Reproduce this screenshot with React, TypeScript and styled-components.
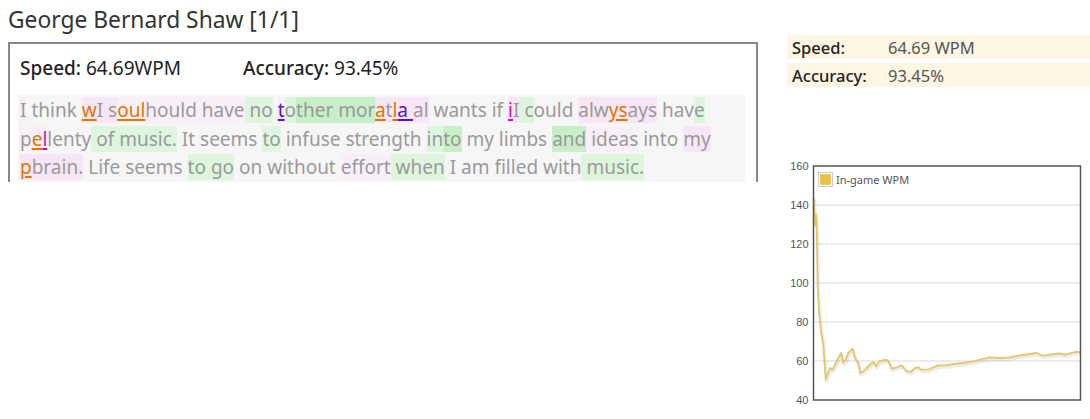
import React from "react";
import styled, { createGlobalStyle } from "styled-components";

const Global = createGlobalStyle`
  html, body { margin: 0; padding: 0; background: #fff; }
  body { font-family: "Noto Sans", "Open Sans", sans-serif; }
`;

const Page = styled.div`
  display: flex;
  align-items: flex-start;
  padding: 0 0 0 8px;
  width: 1090px;
  height: 419px;
  box-sizing: border-box;
  overflow: hidden;
`;

const LeftCol = styled.div`
  width: 750px;
  flex: none;
  display: flex;
  flex-direction: column;
`;

const Title = styled.h2`
  margin: 2px 0 0 0;
  font-size: 22.8px;
  line-height: 36px;
  font-weight: 400;
  color: #333;
`;

const Box = styled.div`
  margin-top: 4px;
  height: 140px;
  border: 2px solid #888;
  border-bottom: none;
  box-sizing: border-box;
  padding: 0 11px 0 8px;
  display: flex;
  flex-direction: column;
`;

const StatRow = styled.div`
  display: flex;
  padding: 9px 0 0 2px;
  height: 51px;
  box-sizing: border-box;
  font-size: 19px;
  line-height: 30px;
  color: #222;
`;

const Stat = styled.div<{ $w?: number }>`
  width: ${(p) => p.$w ?? 160}px;
  flex: none;
`;

const Label = styled.span`
  font-weight: 500;
`;

const TextArea = styled.div`
  background: #f6f6f6;
  padding: 1px 2px 0;
  font-size: 19px;
  line-height: 28.5px;
  color: #9a9a9a;
  height: 87px;
  box-sizing: border-box;
  overflow: hidden;
`;

const bgMap: Record<string, string> = {
  n: "transparent",
  p: "#f6e6f6",
  q: "#f9eff9",
  g: "#def5de",
  G: "#c8efc8",
};

const Seg = styled.span<{ $bg: string }>`
  background: ${(p) => bgMap[p.$bg]};
`;

const errColor: Record<string, string> = {
  o: "#dd7700",
  u: "#5a10d8",
  m: "#cc10b8",
};

const Err = styled.span<{ $c: string }>`
  color: ${(p) => errColor[p.$c]};
  text-decoration: underline;
  text-decoration-thickness: 2px;
  text-underline-offset: 2px;
`;

const RightCol = styled.div`
  margin-left: 29px;
  margin-top: 35px;
  flex: 1;
  display: flex;
  flex-direction: column;
`;

const StatsTable = styled.div`
  display: flex;
  flex-direction: column;
  gap: 4px;
`;

const StatsRow = styled.div`
  display: flex;
  background: #fdf6e2;
  height: 24px;
  align-items: center;
  padding-left: 5px;
  font-size: 16.5px;
`;

const StatsLabel = styled.div`
  width: 96px;
  font-weight: 500;
  color: #222;
`;

const StatsValue = styled.div`
  color: #555;
`;

const ChartWrap = styled.div`
  margin-left: -7px;
  margin-top: 71px;
  width: 310px;
  height: 259px;
`;

type Piece = string | [string, string];
type Segment = [string, Piece[]];

const segments: Segment[] = [
  ["q", ["I"]],
  ["n", [" think "]],
  ["p", [["o", "w"], "I s"]],
  ["q", [["o", "oul"], "hould have"]],
  ["g", [" no"]],
  ["n", [" "]],
  ["q", [["u", "t"]]],
  ["g", ["o"]],
  ["G", ["ther mor"]],
  ["p", [["o", "a"], "t", ["o", "l"], ["u", "a "], "al"]],
  ["n", [" wants if "]],
  ["p", [["m", "i"], "I"]],
  ["g", [" c"]],
  ["n", ["ould "]],
  ["p", ["alw", ["o", "ys"], "ays"]],
  ["n", [" hav"]],
  ["g", ["e "]],
  ["q", ["p", ["o", "e"], ["m", "l"]]],
  ["n", ["lenty"]],
  ["g", [" of music."]],
  ["n", [" It seems "]],
  ["g", ["to"]],
  ["n", [" infuse strength "]],
  ["g", ["in"]],
  ["G", ["to"]],
  ["n", [" my limbs "]],
  ["G", ["and"]],
  ["q", [" ideas"]],
  ["n", [" into "]],
  ["p", ["my "]],
  ["p", [["o", "p"], "brain."]],
  ["n", [" Life seems "]],
  ["g", ["to go"]],
  ["n", [" on without "]],
  ["q", ["effort"]],
  ["g", [" when"]],
  ["n", [" I am filled with"]],
  ["g", [" music."]],
];

const pts: [number, number][] = [
  [813.7, 200], [814.7, 226.7], [816, 216.7], [816.7, 230], [817.7, 290],
  [819, 313], [820, 323], [821, 333], [823.3, 346.7], [825.7, 381.7],
  [827.3, 376.7], [830, 370], [832.7, 371.7], [835, 366.7], [838.3, 360],
  [841, 355], [843.3, 365], [845.7, 361.7], [848.3, 355], [852.7, 350.7],
  [855, 360], [858.3, 365], [860, 375], [863.3, 373.3], [866.7, 370],
  [870.7, 366], [873.3, 364], [876, 368.3], [879.3, 363.3], [885, 361.7],
  [888.3, 362.7], [891.7, 370.7], [896.7, 369.3], [901.7, 367.3], [906, 372.7],
  [910.7, 374], [915, 370], [918.3, 369.3], [921.7, 371.7], [928.3, 371.7],
  [933.3, 369.3], [938.3, 367.3], [946.7, 367.3], [953.3, 366], [963.3, 365],
  [973.3, 363.3], [980, 361.7], [990, 359.3], [1000, 360], [1010, 359.3],
  [1020, 357.3], [1030, 356], [1036.7, 355], [1041.7, 357.3], [1046.7, 357.3],
  [1053.3, 356], [1060, 355.3], [1065, 356.7], [1070, 355.3], [1075, 354],
  [1080, 354],
];

const OX = 780;
const OY = 160;
const plotL = 813.5 - OX;
const plotR = 1080.5 - OX;
const plotT = 168 - OY;
const plotB = 402 - OY;
const yFor = (v: number) => plotT + ((160 - v) / 120) * (plotB - plotT);

const Chart: React.FC = () => {
  const d = pts.map((p, i) => `${i ? "L" : "M"}${(p[0] - OX).toFixed(1)} ${(p[1] - OY).toFixed(1)}`).join(" ");
  const ticks = [160, 140, 120, 100, 80, 60, 40];
  return (
    <svg width="310" height="259" viewBox="0 0 310 259">
      {ticks.map((t) => (
        <g key={t}>
          {t !== 160 && t !== 40 && (
            <line x1={plotL} x2={plotR} y1={yFor(t)} y2={yFor(t)} stroke="#d9d9d9" strokeWidth="1" />
          )}
          <text
            x={plotL - 5}
            y={yFor(t) + 4}
            textAnchor="end"
            fontSize="11"
            fontFamily="'Liberation Sans', Arial, sans-serif"
            fill="#545454"
          >
            {t}
          </text>
        </g>
      ))}
      <path d={d} fill="none" stroke="#000" strokeOpacity="0.08" strokeWidth="3" transform="translate(1,2)" strokeLinejoin="round" />
      <path d={d} fill="none" stroke="#e6c66a" strokeWidth="1.8" strokeLinejoin="round" />
      <rect x={plotL} y={plotT} width={plotR - plotL} height={plotB - plotT} fill="none" stroke="#545454" strokeWidth="1.5" />
      <rect x="38.5" y="14.5" width="14" height="14" fill="#fff" stroke="#ccc" strokeWidth="1" />
      <rect x="40.5" y="16.5" width="10" height="10" fill="#edc240" stroke="#e0b020" strokeWidth="0.5" />
      <text x="56" y="25.5" fontSize="11" fontFamily="'Noto Sans', sans-serif" fill="#545454">
        In-game WPM
      </text>
    </svg>
  );
};

const App: React.FC = () => (
  <>
    <Global />
    <Page>
      <LeftCol>
        <Title>George Bernard Shaw [1/1]</Title>
        <Box>
          <StatRow>
            <Stat $w={223}>
              <Label>Speed:</Label> 64.69WPM
            </Stat>
            <Stat>
              <Label>Accuracy:</Label> 93.45%
            </Stat>
          </StatRow>
          <TextArea>
            {segments.map(([bg, pieces], i) => (
              <Seg key={i} $bg={bg}>
                {pieces.map((pc, j) =>
                  typeof pc === "string" ? (
                    <React.Fragment key={j}>{pc}</React.Fragment>
                  ) : (
                    <Err key={j} $c={pc[0]}>
                      {pc[1]}
                    </Err>
                  )
                )}
              </Seg>
            ))}
          </TextArea>
        </Box>
      </LeftCol>
      <RightCol>
        <StatsTable>
          <StatsRow>
            <StatsLabel>Speed:</StatsLabel>
            <StatsValue>64.69 WPM</StatsValue>
          </StatsRow>
          <StatsRow>
            <StatsLabel>Accuracy:</StatsLabel>
            <StatsValue>93.45%</StatsValue>
          </StatsRow>
        </StatsTable>
        <ChartWrap>
          <Chart />
        </ChartWrap>
      </RightCol>
    </Page>
  </>
);

export default App;
